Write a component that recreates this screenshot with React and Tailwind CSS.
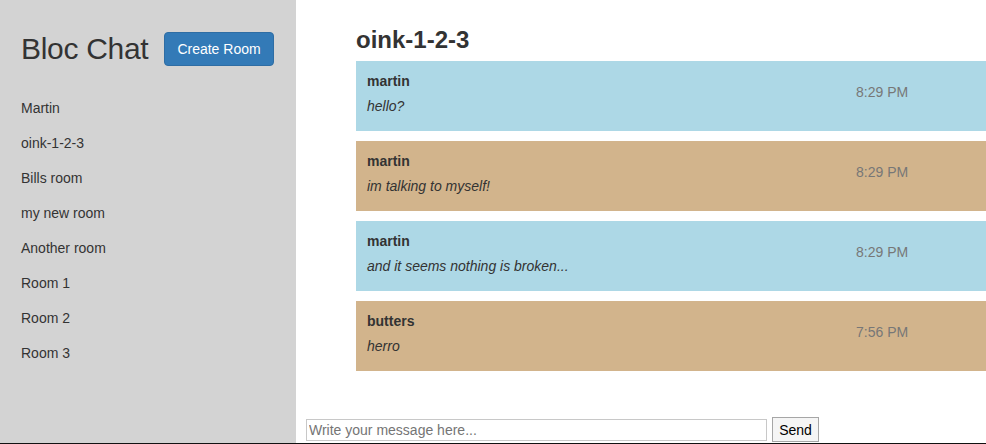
const rooms = ["Martin", "oink-1-2-3", "Bills room", "my new room", "Another room", "Room 1", "Room 2", "Room 3"];

const messages = [
  { user: "martin", text: "hello?", time: "8:29 PM", bg: "bg-[#add8e6]" },
  { user: "martin", text: "im talking to myself!", time: "8:29 PM", bg: "bg-[#d2b48c]" },
  { user: "martin", text: "and it seems nothing is broken...", time: "8:29 PM", bg: "bg-[#add8e6]" },
  { user: "butters", text: "herro", time: "7:56 PM", bg: "bg-[#d2b48c]" },
];

export default function App() {
  return (
    <div className="h-[444px] w-full flex border-b border-[#111] overflow-hidden font-['Liberation_Sans',Arial,sans-serif] text-[14px] text-[#333]">
      {/* sidebar */}
      <aside className="w-[296px] shrink-0 bg-[#d3d3d3] pl-[21px] pt-[32px]">
        <div className="flex items-start">
          <h1 className="text-[30px] leading-[33px] font-normal text-[#333] tracking-[-0.3px]">Bloc Chat</h1>
          <button className="ml-[16px] h-[34px] px-[12px] rounded-[4px] bg-[#337ab7] border border-[#2e6da4] text-white text-[14px] leading-[20px]">
            Create Room
          </button>
        </div>
        <ul className="mt-[32px]">
          {rooms.map((r) => (
            <li key={r} className="leading-[20px] mb-[15px]">{r}</li>
          ))}
        </ul>
      </aside>

      {/* main */}
      <main className="flex-1 min-w-0 flex flex-col bg-white">
        <div className="pl-[60px] pt-[27px]">
          <h2 className="text-[24px] leading-[26px] font-bold text-[#333] mb-[8px]">oink-1-2-3</h2>
          <div className="w-[700px] flex flex-col gap-[10px]">
            {messages.map((m, i) => (
              <div key={i} className={`h-[70px] flex pl-[11px] ${m.bg}`}>
                <div className="w-[489px] pt-[10px]">
                  <div className="font-bold leading-[20px]">{m.user}</div>
                  <div className="italic leading-[20px] mt-[5px]">{m.text}</div>
                </div>
                <div className="pt-[21px] leading-[20px] text-[#777]">{m.time}</div>
              </div>
            ))}
          </div>
        </div>

        <div className="mt-auto flex items-end pl-[10px] pb-[1px]">
          <input
            className="w-[461px] h-[22px] mb-[1px] border border-[#c8c8c8] px-[2px] text-[14px] text-[#333] placeholder:text-[#757575] outline-none"
            placeholder="Write your message here..."
          />
          <button className="ml-[5px] w-[47px] h-[25px] bg-[#f5f5f5] border border-[#a6a6a6] text-[14px] text-black leading-none">
            Send
          </button>
        </div>
      </main>
    </div>
  );
}
